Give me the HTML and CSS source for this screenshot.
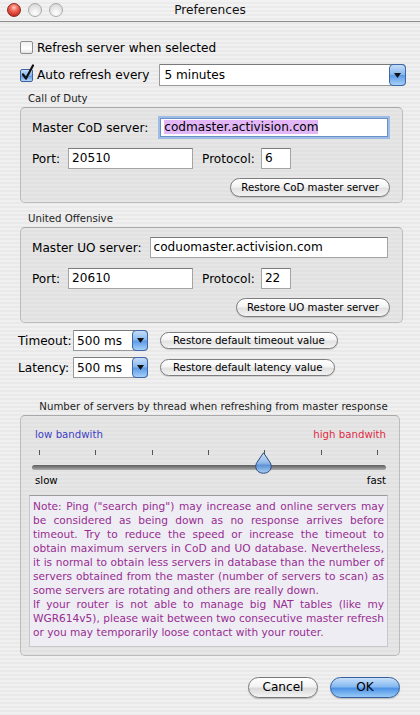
FILE: index.html
```html
<!DOCTYPE html>
<html>
<head>
    <title>Preferences</title>
    <link rel="stylesheet" href="styles.css">
</head>
<body>
<div class="window">
    <div class="titlebar">
        <div class="lights">
            <span class="light close"></span>
            <span class="light"></span>
            <span class="light"></span>
        </div>
        <div class="title">Preferences</div>
        <div></div>
    </div>

    <div class="content">
        <div class="row row-refresh">
            <span class="checkbox"></span>
            <span>Refresh server when selected</span>
        </div>

        <div class="row row-auto">
            <span class="checkbox checked">
                <svg width="15" height="17" viewBox="0 0 15 17"><path d="M3 10.5 L6 14.5 L13 1.5" fill="none" stroke="#111" stroke-width="2.2" stroke-linecap="round" stroke-linejoin="round"/></svg>
            </span>
            <span>Auto refresh every</span>
            <div class="popup popup-wide">
                <span class="popup-value">5 minutes</span>
                <span class="popup-arrow"><svg width="7" height="5" viewBox="0 0 7 5"><path d="M0 0 H7 L3.5 5 Z" fill="#111"/></svg></span>
            </div>
        </div>

        <div class="group-title">Call of Duty</div>
        <div class="group">
            <div class="frow">
                <span class="lbl">Master CoD server:</span>
                <span class="field field-master focused"><span class="selected">codmaster.activision.com</span></span>
            </div>
            <div class="frow frow-port">
                <span class="lbl">Port:</span>
                <span class="field field-port">20510</span>
                <span class="lbl lbl-proto">Protocol:</span>
                <span class="field field-proto">6</span>
            </div>
            <div class="btnrow">
                <span class="pushbtn">Restore CoD master server</span>
            </div>
        </div>

        <div class="group-title group-title-uo">United Offensive</div>
        <div class="group">
            <div class="frow">
                <span class="lbl">Master UO server:</span>
                <span class="field field-master">coduomaster.activision.com</span>
            </div>
            <div class="frow frow-port">
                <span class="lbl">Port:</span>
                <span class="field field-port">20610</span>
                <span class="lbl lbl-proto">Protocol:</span>
                <span class="field field-proto">22</span>
            </div>
            <div class="btnrow">
                <span class="pushbtn">Restore UO master server</span>
            </div>
        </div>

        <div class="row row-timeout">
            <span class="lbl lbl-time">Timeout:</span>
            <div class="popup popup-small">
                <span class="popup-value">500 ms</span>
                <span class="popup-arrow"><svg width="7" height="5" viewBox="0 0 7 5"><path d="M0 0 H7 L3.5 5 Z" fill="#111"/></svg></span>
            </div>
            <span class="pushbtn pushbtn-wide">Restore default timeout value</span>
        </div>
        <div class="row row-latency">
            <span class="lbl lbl-time">Latency:</span>
            <div class="popup popup-small">
                <span class="popup-value">500 ms</span>
                <span class="popup-arrow"><svg width="7" height="5" viewBox="0 0 7 5"><path d="M0 0 H7 L3.5 5 Z" fill="#111"/></svg></span>
            </div>
            <span class="pushbtn pushbtn-wide">Restore default latency value</span>
        </div>

        <div class="group-title group-title-center">Number of servers by thread when refreshing from master response</div>
        <div class="group group-slider">
            <div class="bandwidth">
                <span class="low">low bandwith</span>
                <span class="high">high bandwith</span>
            </div>
            <div class="ticks">
                <span></span><span></span><span></span><span></span><span></span><span></span><span></span>
            </div>
            <div class="track">
                <svg class="thumb" width="17" height="22" viewBox="0 0 17 22">
                    <defs>
                        <linearGradient id="drop" x1="0" y1="0" x2="0" y2="1">
                            <stop offset="0" stop-color="#cfe2f7"/>
                            <stop offset="0.5" stop-color="#8fb8e8"/>
                            <stop offset="0.62" stop-color="#5f93d6"/>
                            <stop offset="1" stop-color="#a9d0f5"/>
                        </linearGradient>
                    </defs>
                    <path d="M8.5 0.8 L15 10.3 C15.9 11.6 16.2 13 16.2 14.4 C16.2 18.4 13 21.2 8.5 21.2 C4 21.2 0.8 18.4 0.8 14.4 C0.8 13 1.1 11.6 2 10.3 Z" fill="url(#drop)" stroke="#2d4a78" stroke-width="1"/>
                </svg>
            </div>
            <div class="speed">
                <span>slow</span>
                <span>fast</span>
            </div>
            <div class="note">Note: Ping ("search ping") may increase and online servers may be considered as being down as no response arrives before timeout. Try to reduce the speed or increase the timeout to obtain maximum servers in CoD and UO database. Nevertheless, it is normal to obtain less servers in database than the number of servers obtained from the master (number of servers to scan) as some servers are rotating and others are really down.<br>If your router is not able to manage big NAT tables (like my WGR614v5), please wait between two consecutive master refresh or you may temporarily loose contact with your router.</div>
        </div>

        <div class="actions">
            <span class="btn">Cancel</span>
            <span class="btn btn-default">OK</span>
        </div>
    </div>
</div>
</body>
</html>
```

FILE: styles.css
```css
* {
    box-sizing: border-box;
}
body {
    margin: 0;
    font-family: "DejaVu Sans", sans-serif;
    font-size: 12.1px;
    color: #000;
}
.window {
    width: 420px;
    height: 715px;
    overflow: hidden;
    background: repeating-linear-gradient(#f0f0f0 0 2px, #e9e9e9 2px 4px);
}

/* title bar */
.titlebar {
    height: 22px;
    display: grid;
    grid-template-columns: 1fr auto 1fr;
    align-items: center;
    border-bottom: 1px solid #8e8e8e;
    background: repeating-linear-gradient(#f2f2f2 0 2px, #ebebeb 2px 4px);
}
.lights {
    display: flex;
    gap: 7px;
    padding-left: 7px;
    margin-top: -1px;
}
.light {
    width: 14px;
    height: 14px;
    border-radius: 50%;
    border: 1px solid #a9a9a9;
    background: radial-gradient(circle at 50% 75%, #ffffff 0, #eaeaea 45%, #cfcfcf 100%);
}
.light.close {
    border-color: #8a2a22;
    background: radial-gradient(circle at 50% 30%, #ffc9c0 0, #f06a5a 35%, #c8281c 80%, #a51c12 100%);
}
.title {
    font-size: 12.2px;
    color: #111;
    margin-top: -1px;
}

.content {
    padding: 0 17px 0 20px;
}
.row {
    display: flex;
    align-items: center;
}
.row-refresh {
    margin-top: 15px;
    height: 21px;
}
.row-auto {
    margin-top: 6px;
    height: 22px;
}

/* checkbox */
.checkbox {
    width: 13px;
    height: 13px;
    margin-right: 4px;
    border: 1px solid #8d8d8d;
    border-radius: 2px;
    background: linear-gradient(#f0f0f0, #ffffff 60%, #e4e4e4);
    position: relative;
}
.checkbox.checked {
    border-color: #3f63a0;
    background: linear-gradient(#c5dcf7, #7aaeea 55%, #5d99e3 56%, #b5d6f7);
}
.checkbox svg {
    position: absolute;
    left: -1px;
    top: -6px;
}

/* popup menus */
.popup {
    display: flex;
    height: 22px;
    border: 1px solid #9a9a9a;
    border-top-color: #7a7a7a;
    border-radius: 0 4px 4px 0;
    background: #fff;
}
.popup-wide {
    margin-left: 10px;
    flex: 1;
    margin-right: -3px;
}
.popup-value {
    flex: 1;
    padding-left: 4px;
    line-height: 20px;
}
.popup-arrow {
    width: 17px;
    margin: -1px -1px -1px 0;
    border: 1px solid #3d67a8;
    border-radius: 4px;
    background: linear-gradient(#c6ddf7, #86b7ee 48%, #5a99e6 52%, #a5d0f8);
    display: flex;
    align-items: center;
    justify-content: center;
}
.popup-small {
    width: 75px;
    height: 21px;
}
.popup-small .popup-value {
    line-height: 20px;
    padding-left: 3px;
}
.popup-small .popup-arrow {
    width: 16px;
}

/* group boxes */
.group-title {
    margin-top: 6px;
    height: 14px;
    padding-left: 8px;
    font-size: 10.2px;
    line-height: 14px;
    color: #222;
}
.group-title-uo {
    margin-top: 9px;
    padding-left: 8px;
}
.group-title-center {
    margin-top: 22px;
    padding-left: 4px;
    text-align: center;
}
.group {
    margin-top: 1px;
    height: 96px;
    padding: 8px 14px 0 11px;
    border: 1px solid #bcbcbc;
    border-top-color: #a9a9a9;
    border-radius: 5px;
    background: repeating-linear-gradient(#e6e6e6 0 2px, #e1e1e1 2px 4px);
}
.frow {
    display: flex;
    align-items: center;
    height: 23px;
}
.frow-port {
    margin-top: 9px;
    height: 21px;
}
.lbl {
    white-space: nowrap;
}
.field {
    height: 21px;
    border: 1px solid #a4a4a4;
    border-top-color: #7c7c7c;
    background: #fff;
    padding-left: 3px;
    line-height: 19px;
    white-space: nowrap;
    overflow: hidden;
}
.field-master {
    flex: 1;
    margin-left: 8px;
}
.field.focused {
    height: 19px;
    margin-left: 12px;
    border-color: #6b90c8;
    box-shadow: 0 0 0 2px #9dbde6;
    line-height: 17px;
}
.selected {
    background: #e2b6f7;
}
.field-port {
    width: 125px;
    margin-left: 8px;
}
.lbl-proto {
    margin-left: 9px;
}
.field-proto {
    width: 30px;
    margin-left: 6px;
}
.btnrow {
    margin-top: 9px;
    display: flex;
    justify-content: flex-end;
}

/* buttons */
.pushbtn {
    height: 19px;
    padding: 0 10px;
    font-size: 10.2px;
    line-height: 17px;
    border: 1px solid #7d7d7d;
    border-radius: 10px;
    background: linear-gradient(#ffffff, #f4f4f4 45%, #e2e2e2 55%, #f3f3f3);
    box-shadow: 0 1px 1px rgba(0, 0, 0, 0.15);
    white-space: nowrap;
}
.btnrow .pushbtn {
    margin-right: -2px;
}
.row-timeout {
    margin-top: 7px;
    height: 21px;
}
.row-latency {
    margin-top: 6px;
    height: 21px;
}
.lbl-time {
    width: 56px;
    margin-left: -2px;
    margin-right: -1px;
}
.pushbtn-wide {
    height: 17px;
    line-height: 15px;
    margin-left: 12px;
    padding: 0 12px;
}

/* slider group */
.group-slider {
    width: 380px;
    height: 241px;
    padding: 12px 11px 0 8px;
}
.bandwidth,
.speed {
    display: flex;
    justify-content: space-between;
    height: 14px;
    line-height: 14px;
    font-size: 10.2px;
    padding: 0 2px 0 6px;
}
.low {
    color: #3d3dc4;
}
.high {
    color: #de2a45;
}
.ticks {
    margin: 8px 0 0 10px;
    width: 339px;
    height: 5px;
    display: flex;
    justify-content: space-between;
}
.ticks span {
    width: 1px;
    background: #555;
}
.track {
    position: relative;
    margin: 10px 2px 0 3px;
    height: 5px;
    border-radius: 3px;
    background: linear-gradient(#5e5e5e, #8a8a8a 60%, #b0b0b0);
}
.thumb {
    position: absolute;
    left: 223px;
    top: -13px;
}
.speed {
    margin-top: 4px;
    color: #000;
}
.note {
    margin-top: 7px;
    height: 152px;
    padding: 3px 3px 0 3px;
    border: 1px solid #c8c8c8;
    border-top-color: #9c9c9c;
    background: #eeedf3;
    color: #982c92;
    font-size: 10.6px;
    line-height: 14px;
    text-align: justify;
}

.actions {
    display: flex;
    justify-content: flex-end;
    gap: 12px;
    margin-top: 21px;
    margin-right: 3px;
}
.btn {
    width: 70px;
    height: 21px;
    border: 1px solid #777;
    border-radius: 11px;
    text-align: center;
    font-size: 12.1px;
    line-height: 19px;
    background: linear-gradient(#ffffff, #f2f2f2 45%, #dadada 55%, #f4f4f4);
    box-shadow: 0 1px 1px rgba(0, 0, 0, 0.2);
}
.btn-default {
    border-color: #355d99;
    background: linear-gradient(#c8e0fa, #85b9f0 45%, #4f93e6 55%, #99cbf7);
}
```
